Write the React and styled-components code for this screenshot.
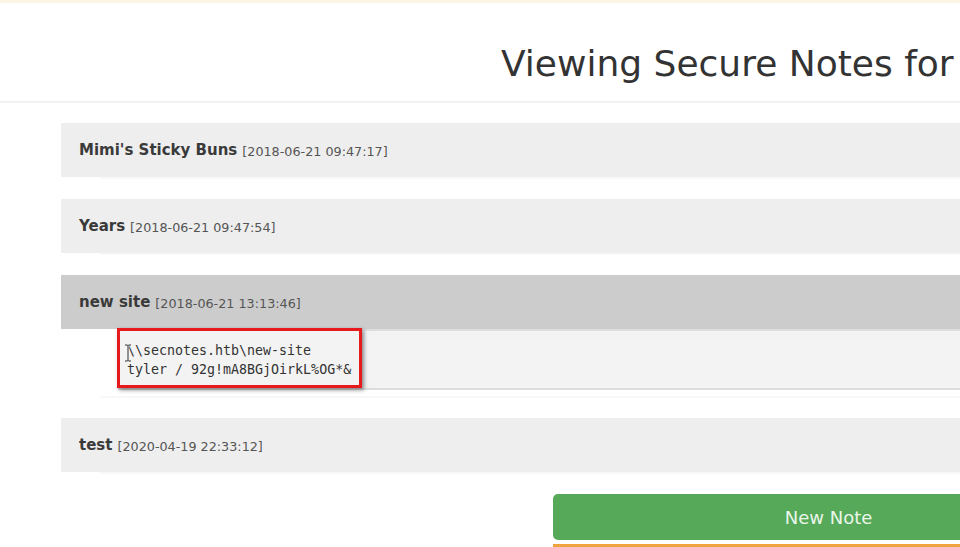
import React from 'react'
import styled, { createGlobalStyle } from 'styled-components'

const GlobalStyle = createGlobalStyle`
  html, body {
    margin: 0;
    padding: 0;
    overflow: hidden;
    background: #ffffff;
    font-family: "DejaVu Sans", Verdana, sans-serif;
  }
`

const Page = styled.div`
  width: 960px;
  height: 547px;
  overflow: hidden;
`

const TopStrip = styled.div`
  height: 3px;
  background: #fcf5e5;
`

const Header = styled.header`
  padding: 40px 0 16px 501px;
  border-bottom: 2px solid #f2f2f2;
`

const Title = styled.h1`
  margin: 0;
  font-size: 36px;
  line-height: 42px;
  font-weight: 400;
  color: #333333;
  white-space: nowrap;
`

const Notes = styled.div`
  display: flex;
  flex-direction: column;
  padding: 20px 0 0 61px;
`

const Panel = styled.div`
  display: flex;
  flex-direction: column;
  margin-bottom: 20px;

  &::after {
    content: '';
    display: block;
    height: 2px;
    margin-left: 39px;
    background: #f8f8f8;
  }
`

const Heading = styled.div`
  display: flex;
  align-items: center;
  gap: 5px;
  height: 54px;
  padding: 0 18px;
  background: ${p => (p.$open ? '#cccccc' : '#eeeeee')};
  color: #3a3a3a;
  white-space: nowrap;
`

const Name = styled.span`
  font-size: 15px;
  font-weight: 700;
`

const Stamp = styled.span`
  font-size: 12.75px;
  color: #555555;
  padding-top: 2px;
`

const Body = styled.div`
  position: relative;
  margin: 0 0 6px 57px;
  padding: 10px 9px 9px;
  background: #f3f3f3;
  border-top: 2px solid #dddddd;
  border-bottom: 2px solid #dddddd;
`

const Pre = styled.pre`
  margin: 0;
  font-family: "DejaVu Sans Mono", "Liberation Mono", monospace;
  font-size: 13.3px;
  line-height: 19px;
  color: #333333;
`

const Highlight = styled.div`
  position: absolute;
  left: -1px;
  top: -3px;
  width: 239px;
  height: 54px;
  border: 3px solid #e8191c;
  box-shadow: 2px 2px 4px rgba(0, 0, 0, 0.45);
  pointer-events: none;
`

const Cursor = styled.svg`
  position: absolute;
  left: 6px;
  top: 13px;
`

const Actions = styled.div`
  display: flex;
  flex-direction: column;
  padding: 0 0 0 553px;
`

const NewNote = styled.button`
  width: 551px;
  height: 46px;
  flex-shrink: 0;
  border: none;
  border-radius: 5px;
  background: #55a958;
  color: #eaf6ea;
  font-family: "DejaVu Sans", Verdana, sans-serif;
  font-size: 18px;
`

const FocusLine = styled.div`
  width: 551px;
  height: 3px;
  flex-shrink: 0;
  margin-top: 4px;
  background: #f0a33c;
`

const notes = [
  { id: 1, name: "Mimi's Sticky Buns", date: '2018-06-21 09:47:17' },
  { id: 2, name: 'Years', date: '2018-06-21 09:47:54' },
  {
    id: 3,
    name: 'new site',
    date: '2018-06-21 13:13:46',
    open: true,
    text: '\\\\secnotes.htb\\new-site\ntyler / 92g!mA8BGjOirkL%OG*&',
  },
  { id: 4, name: 'test', date: '2020-04-19 22:33:12' },
]

const IBeam = () => (
  <Cursor width="8" height="18" viewBox="0 0 8 18">
    <path d="M1 1h2.5l0.5 0.6 0.5-0.6H7M4 1.6v14.8M1 17h2.5l0.5-0.6 0.5 0.6H7" fill="none" stroke="#ffffff" strokeWidth="2.4" />
    <path d="M1 1h2.5l0.5 0.6 0.5-0.6H7M4 1.6v14.8M1 17h2.5l0.5-0.6 0.5 0.6H7" fill="none" stroke="#222222" strokeWidth="1" />
  </Cursor>
)

const App = () => (
  <Page>
    <GlobalStyle />
    <TopStrip />
    <Header>
      <Title>Viewing Secure Notes for</Title>
    </Header>
    <Notes>
      {notes.map(note => (
        <Panel key={note.id}>
          <Heading $open={note.open}>
            <Name>{note.name}</Name>
            <Stamp>[{note.date}]</Stamp>
          </Heading>
          {note.open && (
            <Body>
              <Pre>{note.text}</Pre>
              <Highlight />
              <IBeam />
            </Body>
          )}
        </Panel>
      ))}
    </Notes>
    <Actions>
      <NewNote>New Note</NewNote>
      <FocusLine />
    </Actions>
  </Page>
)

export default App
